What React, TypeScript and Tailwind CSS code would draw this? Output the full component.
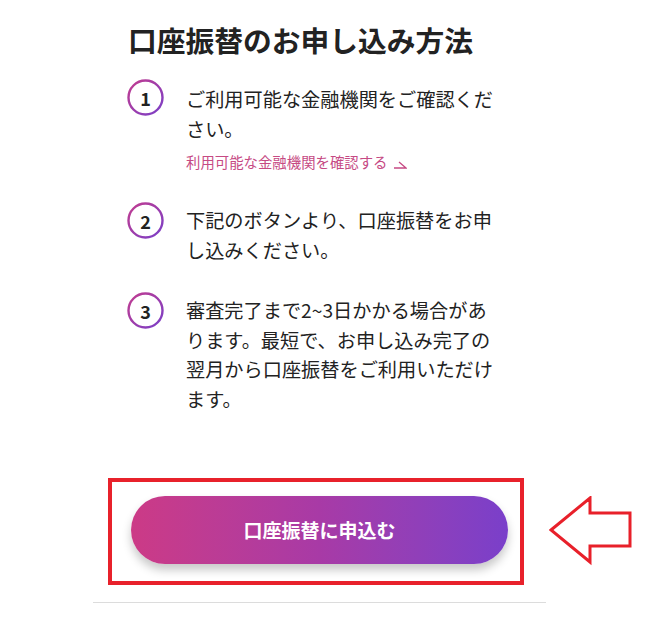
import React from "react"

const steps = [
  {
    num: "1",
    lines: ["ご利用可能な金融機関をご確認くだ", "さい。"],
    link: "利用可能な金融機関を確認する",
    rowClass: "mt-[19px]",
    textClass: "pt-[6px]",
  },
  {
    num: "2",
    lines: ["下記のボタンより、口座振替をお申", "し込みください。"],
    rowClass: "mt-[30px]",
    textClass: "pt-[4px]",
  },
  {
    num: "3",
    lines: [
      "審査完了まで2~3日かかる場合があ",
      "ります。最短で、お申し込み完了の",
      "翌月から口座振替をご利用いただけ",
      "ます。",
    ],
    rowClass: "mt-[27px]",
    textClass: "pt-[4px]",
  },
]

function StepCircle({ num }: { num: string }) {
  return (
    <div className="relative w-[37px] h-[37px] shrink-0 flex items-center justify-center">
      <svg width="37" height="37" viewBox="0 0 37 37" className="absolute inset-0">
        <defs>
          <linearGradient id={`ring-${num}`} x1="0" y1="0" x2="1" y2="1">
            <stop offset="0%" stopColor="#c23c8f" />
            <stop offset="100%" stopColor="#7a3fc8" />
          </linearGradient>
        </defs>
        <circle cx="18.5" cy="18.5" r="17" fill="none" stroke={`url(#ring-${num})`} strokeWidth="2.4" />
      </svg>
      <span className="relative text-[18px] font-bold text-[#222] leading-none">{num}</span>
    </div>
  )
}

export default function App() {
  return (
    <div
      className="relative w-[657px] h-[629px] bg-white overflow-hidden"
      style={{ fontFamily: '"Noto Sans CJK JP", "Noto Sans", sans-serif' }}
    >
      <div className="ml-[93px] w-[453px]">
        <h1 className="pt-[20px] pl-[35px] text-[28.75px] leading-[40px] font-bold text-[#222]">
          口座振替のお申し込み方法
        </h1>

        <div className="pl-[34px]">
          {steps.map(step => (
            <div key={step.num} className={`flex items-start gap-[22px] ${step.rowClass}`}>
              <StepCircle num={step.num} />
              <div className={`w-[310px] ${step.textClass}`}>
                <p className="text-[19.2px] leading-[29.5px] text-[#222]">
                  {step.lines.map((line, i) => (
                    <span key={i} className="block whitespace-nowrap">
                      {line}
                    </span>
                  ))}
                </p>
                {step.link && (
                  <a className="mt-[8px] flex items-center gap-[6px] text-[14.4px] leading-[20px] text-[#c64a84]">
                    {step.link}
                    <svg width="14" height="10" viewBox="0 0 14 10" className="mt-[3px]">
                      <path d="M1 9 H13 L6 3" fill="none" stroke="#c64a84" strokeWidth="1.3" />
                    </svg>
                  </a>
                )}
              </div>
            </div>
          ))}
        </div>

        {/* button with highlight */}
        <div className="mt-[64px] ml-[15px] flex items-center gap-[25px]">
          <div className="shrink-0 w-[416px] h-[107px] border-4 border-[#e8212b] pl-[19px] pt-[14px]">
            <button className="w-[377px] h-[68px] rounded-full bg-linear-to-r from-[#cc3a86] via-[#a83aa6] to-[#7a3fca] text-white text-[19px] font-bold shadow-[0_6px_10px_rgba(0,0,0,0.22)]">
              口座振替に申込む
            </button>
          </div>
          <svg width="84" height="70" viewBox="0 0 84 70" className="shrink-0 mt-[-2px]">
            <path
              d="M2 34 L41 2 V17 H81 V50 H41 V66 Z"
              fill="white"
              stroke="#e8202a"
              strokeWidth="3"
              strokeLinejoin="miter"
            />
          </svg>
        </div>

        <div className="mt-[17px] h-px bg-[#dcdcdc]" />
      </div>
    </div>
  )
}
